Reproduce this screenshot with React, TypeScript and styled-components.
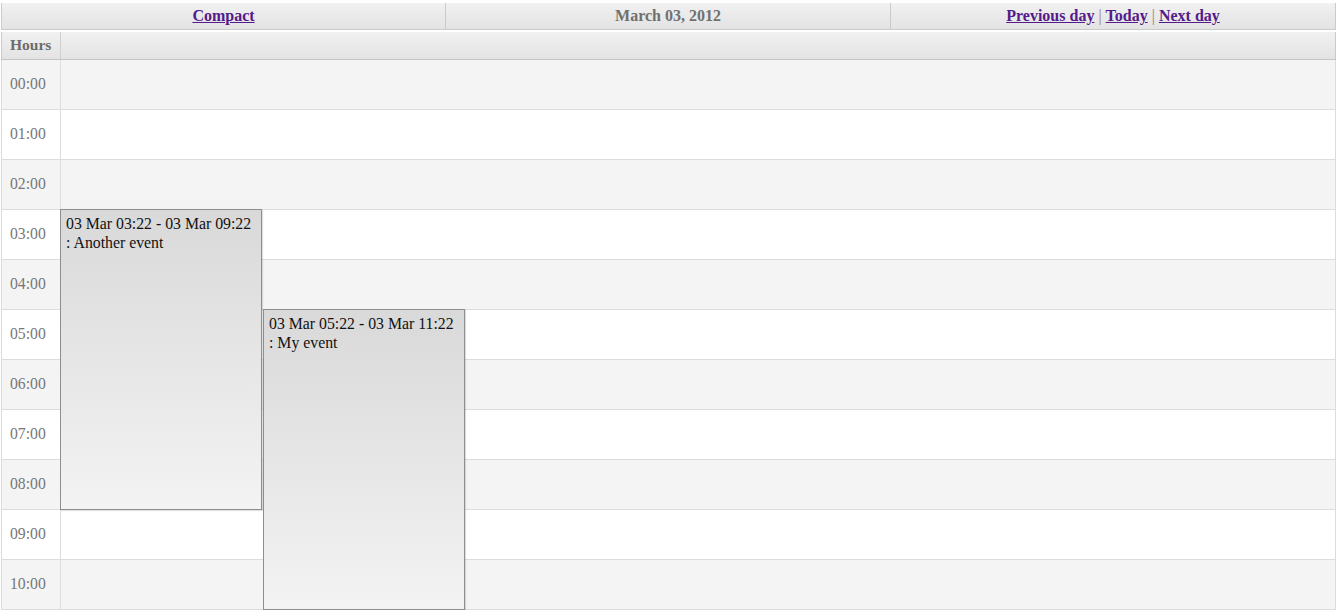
import React from 'react'
import styled, { createGlobalStyle } from 'styled-components'

const GlobalStyle = createGlobalStyle`
  html, body {
    margin: 0;
    padding: 0;
    overflow: hidden;
    background: #fff;
    font-family: 'Liberation Serif', 'Times New Roman', serif;
    font-size: 16px;
  }
`

const Calendar = styled.div`
  width: 1336px;
  margin: 0 0 0 1px;
  padding-top: 3px;
`

const NavBar = styled.div`
  display: grid;
  grid-template-columns: 444px 445px 1fr;
  height: 27px;
  border: 1px solid #cacaca;
  border-top: none;
  background: linear-gradient(#f1f1f1, #e3e3e3);
  box-sizing: border-box;
  width: 1335px;
`

const NavCell = styled.div<{ $last?: boolean }>`
  display: flex;
  align-items: center;
  justify-content: center;
  font-weight: bold;
  color: #707070;
  border-right: ${({ $last }) => ($last ? 'none' : '1px solid #cacaca')};
`

const Link = styled.a`
  color: #551a8b;
  text-decoration: underline;
  cursor: pointer;
`

const Sep = styled.span`
  color: #9c7d6d;
  font-weight: normal;
  margin: 0 4px;
`

const HeadRow = styled.div`
  display: grid;
  grid-template-columns: 59px 1fr;
  height: 28px;
  margin-top: 2px;
  width: 1335px;
  box-sizing: border-box;
  border-left: 1px solid #cacaca;
  border-right: 1px solid #cacaca;
  border-bottom: 1px solid #c4c4c4;
  background: linear-gradient(#f1f1f1, #e3e3e3);
`

const HeadCell = styled.div<{ $label?: boolean }>`
  display: flex;
  align-items: center;
  padding-left: 8px;
  padding-bottom: 2px;
  font-weight: bold;
  font-size: 15.5px;
  color: #6c6c6c;
  border-right: ${({ $label }) => ($label ? '1px solid #cfcfcf' : 'none')};
`

const Body = styled.div`
  position: relative;
  display: grid;
  grid-template-columns: 59px 1fr;
  width: 1335px;
  box-sizing: border-box;
  border-left: 1px solid #dcdcdc;
  border-right: 1px solid #dcdcdc;
`

const HourLabel = styled.div<{ $odd: boolean }>`
  height: 50px;
  box-sizing: border-box;
  display: flex;
  align-items: center;
  padding-left: 8px;
  padding-bottom: 2px;
  color: #777;
  font-size: 15.7px;
  background: ${({ $odd }) => ($odd ? '#fff' : '#f4f4f4')};
  border-bottom: 1px solid #dcdcdc;
  border-right: 1px solid #dcdcdc;
`

const HourSlot = styled.div<{ $odd: boolean }>`
  height: 50px;
  box-sizing: border-box;
  background: ${({ $odd }) => ($odd ? '#fff' : '#f4f4f4')};
  border-bottom: 1px solid #dcdcdc;
`

const EventBox = styled.div`
  position: absolute;
  box-sizing: border-box;
  width: 202px;
  height: 301px;
  padding: 4px 5px;
  border: 1px solid #8e8e8e;
  background: linear-gradient(#d9d9d9, #f3f3f3);
  color: #111;
  font-size: 15.8px;
  line-height: 19px;
  box-shadow: 1px 1px 1px rgba(0, 0, 0, 0.12);
`

const hours = Array.from({ length: 11 }, (_, i) => `${String(i).padStart(2, '0')}:00`)

const events = [
  { start: 3, col: 0, label: '03 Mar 03:22 - 03 Mar 09:22', title: 'Another event' },
  { start: 5, col: 1, label: '03 Mar 05:22 - 03 Mar 11:22', title: 'My event' },
]

export default function App() {
  return (
    <>
      <GlobalStyle />
      <Calendar>
        <NavBar>
          <NavCell>
            <Link>Compact</Link>
          </NavCell>
          <NavCell>March 03, 2012</NavCell>
          <NavCell $last>
            <Link>Previous day</Link>
            <Sep>|</Sep>
            <Link>Today</Link>
            <Sep>|</Sep>
            <Link>Next day</Link>
          </NavCell>
        </NavBar>
        <HeadRow>
          <HeadCell $label>Hours</HeadCell>
          <HeadCell />
        </HeadRow>
        <Body>
          {hours.map((h, i) => (
            <React.Fragment key={h}>
              <HourLabel $odd={i % 2 === 1}>{h}</HourLabel>
              <HourSlot $odd={i % 2 === 1} />
            </React.Fragment>
          ))}
          {events.map((e) => (
            <EventBox
              key={e.title}
              style={{ top: e.start * 50 - 1, left: 58 + e.col * 203 }}
            >
              {e.label}
              <br />: {e.title}
            </EventBox>
          ))}
        </Body>
      </Calendar>
    </>
  )
}
